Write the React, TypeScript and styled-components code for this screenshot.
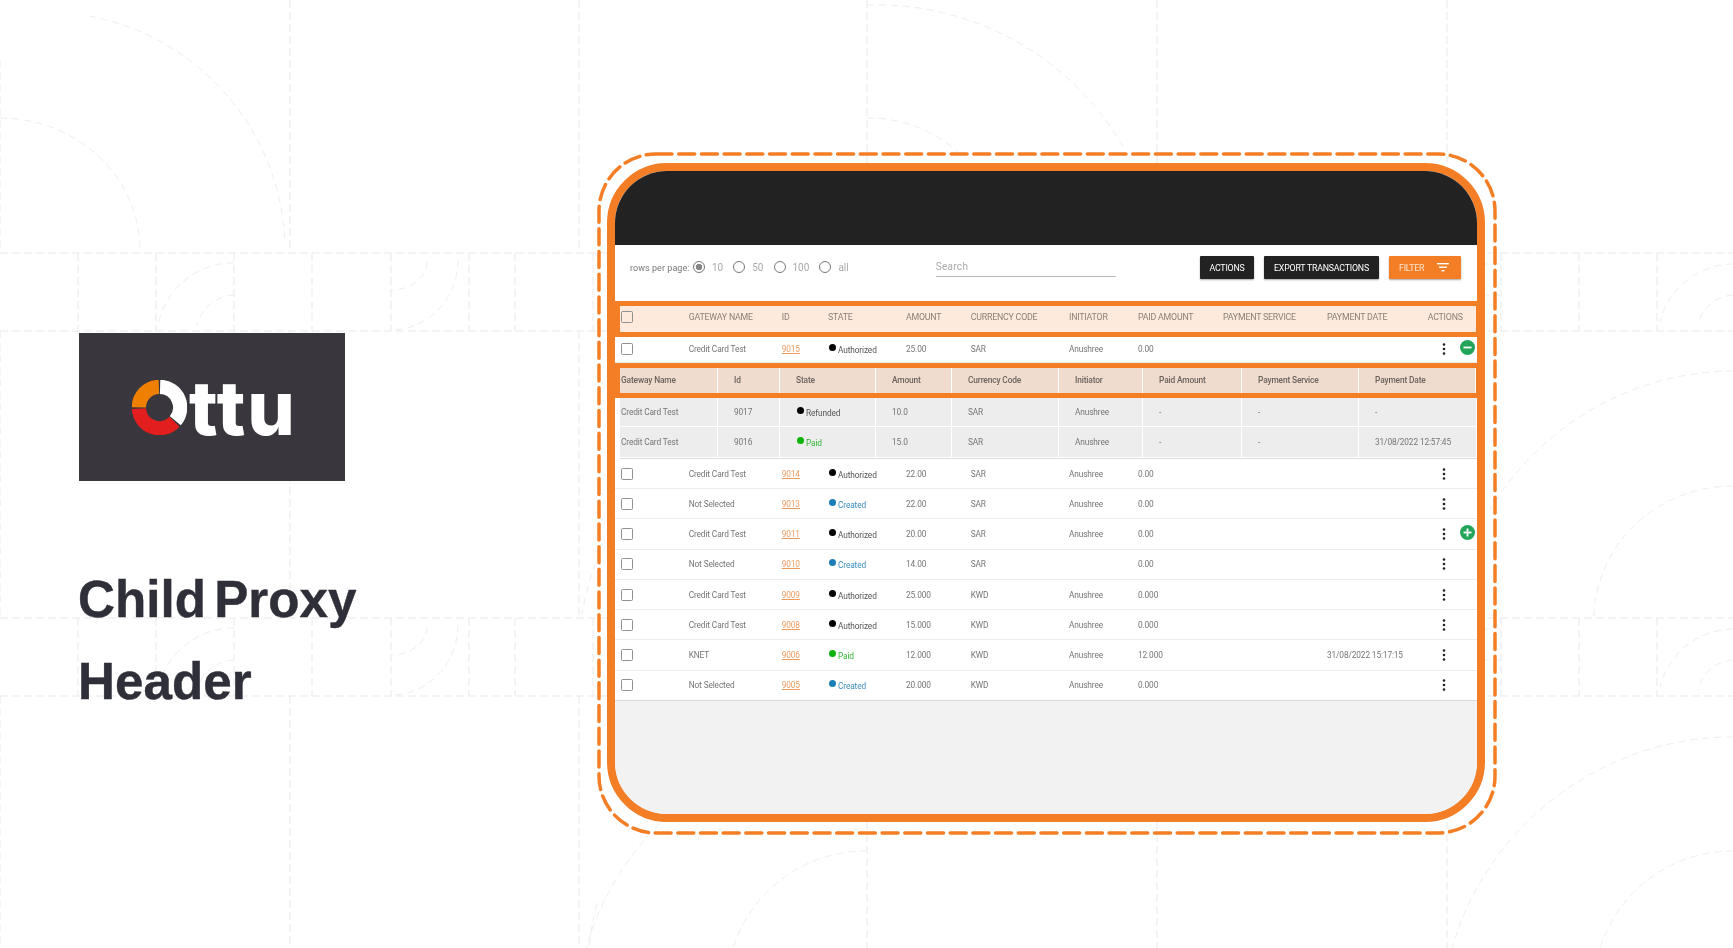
import * as React from 'react';
import styled, { createGlobalStyle } from 'styled-components';

const orange = '#f37e25';
const mainCols = '68.7px 93px 46.3px 78px 64.7px 98.3px 69px 85px 104px 100.7px 1fr';
const subCols = '98px 62px 96px 76px 107px 84px 99px 117px 1fr';

const GlobalStyle = createGlobalStyle`
  html, body {
    margin: 0;
    padding: 0;
    background: #fff;
  }
`;

const Page = styled.div`
  position: relative;
  display: flex;
  width: 1733px;
  height: 948px;
  overflow: hidden;
  background: #fff;
  font-family: Roboto, "Liberation Sans", sans-serif;
`;

const Backdrop = styled.svg`
  position: absolute;
  top: 0;
  left: 0;
  fill: none;
`;

const LeftColumn = styled.div`
  position: relative;
  flex: 0 0 607px;
  box-sizing: border-box;
  padding: 333px 0 0 79px;
`;

const LogoCard = styled.div`
  display: flex;
  align-items: center;
  gap: 2px;
  box-sizing: border-box;
  width: 266px;
  height: 148px;
  padding: 0 0 0 53px;
  background: #39373d;
  filter: blur(0.3px);
`;

const LogoWord = styled.span`
  color: #fff;
  font-family: Inter, sans-serif;
  font-weight: 800;
  font-size: 75px;
  line-height: 72px;
  letter-spacing: 2px;
  margin-top: 2px;
`;

const Title = styled.h1`
  margin: 78px 0 0 -1px;
  color: #2e2f38;
  font-family: "Liberation Sans", Arial, sans-serif;
  font-weight: 700;
  font-size: 51.2px;
  line-height: 82px;
  word-spacing: -6px;
  -webkit-text-stroke: 0.4px #2e2f38;
`;

const FrameWrap = styled.div`
  position: relative;
  width: 878px;
  height: 659px;
  margin-top: 163px;
`;

const DashRing = styled.svg`
  position: absolute;
  top: -12px;
  left: -11px;
  fill: none;
`;

const Frame = styled.div`
  display: flex;
  flex-direction: column;
  box-sizing: border-box;
  width: 100%;
  height: 100%;
  border: 8px solid ${orange};
  border-radius: 60px;
  overflow: hidden;
  background: #f2f2f2;
`;

const Blurred = styled.div`
  display: flex;
  flex-direction: column;
  flex: 1;
  filter: blur(0.3px);
`;

const DarkBar = styled.div`
  flex: 0 0 74px;
  background: #222;
  box-shadow: 0 1px 2px rgba(0, 0, 0, 0.35);
`;

const Toolbar = styled.div`
  display: flex;
  align-items: flex-start;
  box-sizing: border-box;
  height: 56px;
  padding: 11px 16px 0 15px;
  background: #fff;
`;

const RowsLabel = styled.span`
  margin: 7px 7px 0 0;
  width: 56px;
  color: #777;
  font-size: 9px;
  line-height: 11px;
  letter-spacing: 0.05px;
  white-space: nowrap;
`;

const RadioItem = styled.div`
  display: flex;
  align-items: center;
  gap: 7px;
  margin: 4px 10px 0 0;
  height: 14px;
  color: #aaa;
  font-size: 10px;
`;

const RadioMark = styled.span<{ $on?: boolean }>`
  position: relative;
  box-sizing: border-box;
  width: 12px;
  height: 12px;
  border: 1.2px solid #777;
  border-radius: 50%;
  background: ${(p) => (p.$on ? 'radial-gradient(circle, #888 0 3px, transparent 3.4px)' : 'transparent')};
`;

const SearchBox = styled.div`
  box-sizing: border-box;
  width: 180px;
  height: 21px;
  margin-left: 77px;
  padding-top: 5px;
  border-bottom: 1px solid #bbb;
  color: #aaa;
  font-size: 10px;
  letter-spacing: 0.3px;
`;

const ButtonRow = styled.div`
  display: flex;
  gap: 10px;
  margin-left: auto;
`;

const ActionButton = styled.button<{ $w: number; $accent?: boolean }>`
  display: flex;
  align-items: center;
  justify-content: ${(p) => (p.$accent ? 'space-between' : 'center')};
  box-sizing: border-box;
  width: ${(p) => p.$w}px;
  height: 23px;
  padding: 0 ${(p) => (p.$accent ? '12px 0 10px' : '0')};
  border: none;
  border-radius: 1px;
  background: ${(p) => (p.$accent ? orange : '#222')};
  box-shadow: 0 1px 2px rgba(0, 0, 0, 0.35);
  color: ${(p) => (p.$accent ? '#fde3cf' : '#fff')};
  font-family: inherit;
  font-size: 8.8px;
  letter-spacing: -0.2px;
  white-space: nowrap;
`;

const TableHead = styled.div`
  display: grid;
  grid-template-columns: ${mainCols};
  align-items: center;
  box-sizing: border-box;
  height: 36px;
  padding-bottom: 5px;
  border: solid ${orange};
  border-width: 5px 1px 5px 5px;
  background: #fdeadc;
  color: #8b8078;
  font-size: 8.8px;
  letter-spacing: -0.2px;
  white-space: nowrap;
`;

const Row = styled.div<{ $last?: boolean; $h?: number }>`
  display: grid;
  grid-template-columns: ${mainCols};
  align-items: center;
  box-sizing: border-box;
  height: ${(p) => p.$h ?? 30.25}px;
  padding-left: 5px;
  background: #fff;
  border-bottom: 1px solid ${(p) => (p.$last ? '#d9d9d9' : '#ececec')};
  color: #757575;
  font-size: 8.3px;
  letter-spacing: -0.12px;
  white-space: nowrap;
`;

const CheckCell = styled.div`
  display: flex;
  padding-left: 1px;
`;

const Checkbox = styled.span`
  box-sizing: border-box;
  width: 12px;
  height: 12px;
  border: 1.4px solid #909090;
  border-radius: 1.5px;
`;

const IdLink = styled.span`
  color: #ec9b5f;
  text-decoration: underline;
`;

const StateCell = styled.div<{ $tone: string }>`
  display: flex;
  align-items: center;
  gap: 2px;
  padding-left: 1px;
  color: ${(p) => p.$tone};
`;

const StateDot = styled.i<{ $tone: string }>`
  flex: 0 0 7px;
  height: 7px;
  margin-top: -3px;
  border-radius: 50%;
  background: ${(p) => p.$tone};
`;

const StateText = styled.span`
  margin-top: 2px;
`;

const ActionsCell = styled.div`
  display: flex;
  align-items: center;
  padding-left: 14px;
`;

const DotsIcon = styled.svg`
  width: 4px;
  height: 12px;
  fill: #222;
`;

const RoundIcon = styled.svg`
  width: 15px;
  height: 15px;
  margin: -3px 0 0 14px;
`;

const SubHead = styled.div`
  display: grid;
  grid-template-columns: ${subCols};
  align-items: stretch;
  box-sizing: border-box;
  height: 35.3px;
  border: solid ${orange};
  border-width: 5px 1px 5px 5px;
  background: #efdccf;
  color: #6b625b;
  font-size: 8.4px;
  font-weight: 500;
  letter-spacing: -0.15px;
  white-space: nowrap;
`;

const SubCell = styled.div<{ $first?: boolean }>`
  display: flex;
  align-items: center;
  padding-left: ${(p) => (p.$first ? 1 : 16)}px;
  border-right: 1px solid #fff;
`;

const SubRows = styled.div`
  padding-left: 5px;
  background: #fff;
`;

const SubRow = styled.div<{ $h: number }>`
  display: grid;
  grid-template-columns: ${subCols};
  height: ${(p) => p.$h}px;
  margin-bottom: 1px;
  background: #ededed;
  color: #757575;
  font-size: 8.3px;
  letter-spacing: -0.12px;
  white-space: nowrap;
`;

const SubDivider = styled.div`
  height: 1px;
  background: #dcdcdc;
`;

const Filler = styled.div`
  flex: 1;
  background: #f2f2f2;
`;

const RingMark = styled.svg`
  flex: 0 0 55px;
  width: 55px;
  height: 55px;
`;

const headers = ['', 'GATEWAY NAME', 'ID', 'STATE', 'AMOUNT', 'CURRENCY CODE', 'INITIATOR', 'PAID AMOUNT', 'PAYMENT SERVICE', 'PAYMENT DATE', 'ACTIONS'];
const subHeaders = ['Gateway Name', 'Id', 'State', 'Amount', 'Currency Code', 'Initiator', 'Paid Amount', 'Payment Service', 'Payment Date'];

const tones: Record<string, [string, string]> = {
  Authorized: ['#000', '#555'],
  Created: ['#1a7fb8', '#3a8dbd'],
  Paid: ['#0db30d', '#35b535'],
  Refunded: ['#000', '#555'],
};

type Txn = { gateway: string; id: string; state: string; amount: string; cur: string; by: string; paid: string; date?: string; toggle?: 'plus' | 'minus' };

const CC = 'Credit Card Test';
const NS = 'Not Selected';
const AN = 'Anushree';

const firstRow: Txn = { gateway: CC, id: '9015', state: 'Authorized', amount: '25.00', cur: 'SAR', by: AN, paid: '0.00', toggle: 'minus' };
const rows: Txn[] = [
  { gateway: CC, id: '9014', state: 'Authorized', amount: '22.00', cur: 'SAR', by: AN, paid: '0.00' },
  { gateway: NS, id: '9013', state: 'Created', amount: '22.00', cur: 'SAR', by: AN, paid: '0.00' },
  { gateway: CC, id: '9011', state: 'Authorized', amount: '20.00', cur: 'SAR', by: AN, paid: '0.00', toggle: 'plus' },
  { gateway: NS, id: '9010', state: 'Created', amount: '14.00', cur: 'SAR', by: '', paid: '0.00' },
  { gateway: CC, id: '9009', state: 'Authorized', amount: '25.000', cur: 'KWD', by: AN, paid: '0.000' },
  { gateway: CC, id: '9008', state: 'Authorized', amount: '15.000', cur: 'KWD', by: AN, paid: '0.000' },
  { gateway: 'KNET', id: '9006', state: 'Paid', amount: '12.000', cur: 'KWD', by: AN, paid: '12.000', date: '31/08/2022 15:17:15' },
  { gateway: NS, id: '9005', state: 'Created', amount: '20.000', cur: 'KWD', by: AN, paid: '0.000' },
];

const subRows = [
  { h: 28, cells: [CC, '9017', 'Refunded', '10.0', 'SAR', AN, '-', '-', '-'] },
  { h: 30, cells: [CC, '9016', 'Paid', '15.0', 'SAR', AN, '-', '-', '31/08/2022 12:57:45'] },
];

function StateLabel({ state }: { state: string }) {
  const [dot, text] = tones[state];
  return (
    <StateCell $tone={text}>
      <StateDot $tone={dot} />
      <StateText>{state}</StateText>
    </StateCell>
  );
}

function TxnRow({ row, last, h }: { row: Txn; last?: boolean; h?: number }) {
  return (
    <Row $last={last} $h={h}>
      <CheckCell><Checkbox /></CheckCell>
      <span>{row.gateway}</span>
      <IdLink>{row.id}</IdLink>
      <StateLabel state={row.state} />
      <span>{row.amount}</span>
      <span>{row.cur}</span>
      <span>{row.by}</span>
      <span>{row.paid}</span>
      <span />
      <span>{row.date}</span>
      <ActionsCell>
        <DotsIcon viewBox="0 0 4 12">
          <circle cx="2" cy="1.5" r="1.3" />
          <circle cx="2" cy="6" r="1.3" />
          <circle cx="2" cy="10.5" r="1.3" />
        </DotsIcon>
        {row.toggle && (
          <RoundIcon viewBox="0 0 15 15">
            <circle cx="7.5" cy="7.5" r="7.5" fill="#22a55b" />
            <rect x="3.5" y="6.6" width="8" height="1.8" fill="#fff" />
            {row.toggle === 'plus' && <rect x="6.6" y="3.5" width="1.8" height="8" fill="#fff" />}
          </RoundIcon>
        )}
      </ActionsCell>
    </Row>
  );
}

const longV = [
  [290, 0, 253], [290, 331, 618], [290, 696, 948],
  [579, 0, 253], [579, 331, 618], [579, 696, 948],
  [867, 0, 163], [867, 822, 948],
  [1157, 0, 163], [1157, 822, 948],
  [1447, 0, 163], [1447, 822, 948],
  [0, 60, 253], [0, 331, 618], [0, 696, 948],
];
const shortX = [78, 156, 234, 312, 391, 469, 515, 593, 1501, 1579, 1657];
const arcs = [
  'M89 16A240 240 0 0 1 285 243',
  'M0 118A140 132 0 0 1 140 250',
  'M867 5A285 285 0 0 1 1125 150',
  'M867 118A135 135 0 0 1 958 152',
  'M1733 371A285 285 0 0 0 1490 510',
  'M1733 486A139 134 0 0 0 1594 616',
  'M1733 737A293 293 0 0 0 1452 948',
  'M1733 851A139 139 0 0 0 1600 948',
  'M867 851A139 139 0 0 0 733 948',
  'M660 823A293 293 0 0 0 586 948',
  'M600 552A285 285 0 0 0 582 614',
  'M597 903A293 293 0 0 0 589 948',
];
const bandArcs = [0, 365].flatMap((dy) => [
  `M234 ${263 + dy}A77 77 0 0 0 158 ${325 + dy}`,
  `M234 ${295 + dy}A40 40 0 0 0 197 ${325 + dy}`,
  `M427 ${262 + dy}A36 28 0 0 1 391 ${290 + dy}`,
  `M458 ${260 + dy}A67 70 0 0 1 391 ${330 + dy}`,
  `M1733 ${264 + dy}A76 76 0 0 0 1660 ${322 + dy}`,
  `M1733 ${295 + dy}A38 38 0 0 0 1698 ${325 + dy}`,
  `M1501 ${264 + dy}H1485`,
  `M1501 ${295 + dy}H1485`,
]);

function Background() {
  return (
    <Backdrop width="1733" height="948" viewBox="0 0 1733 948">
      <g stroke="#e9e9e9" strokeWidth="1" strokeDasharray="8 4">
        {[253, 331, 618, 696].map((y) => <path key={y} d={`M0 ${y}H1733`} />)}
        {longV.map(([x, a, b]) => <path key={`${x}-${a}`} d={`M${x} ${a}V${b}`} />)}
        {[253, 618].flatMap((y) => shortX.map((x) => <path key={`${x}-${y}`} d={`M${x} ${y}V${y + 78}`} />))}
      </g>
      <g stroke="#eeeeee" strokeWidth="1" strokeDasharray="7 5">
        {[...arcs, ...bandArcs].map((d) => <path key={d} d={d} />)}
      </g>
    </Backdrop>
  );
}

export default function App() {
  return (
    <Page>
      <GlobalStyle />
      <Background />
      <LeftColumn>
        <LogoCard>
          <RingMark viewBox="0 0 56 56">
            <g fill="none" strokeWidth="14.6">
              <path d="M7 27.9A21 21 0 0 1 27.4 7" stroke="#ee7f00" />
              <path d="M28.6 7A21 21 0 0 1 44.1 41.5" stroke="#fff" />
              <path d="M43.2 42.5A21 21 0 0 1 7 29.1" stroke="#e21e1e" />
            </g>
          </RingMark>
          <LogoWord>ttu</LogoWord>
        </LogoCard>
        <Title>Child Proxy<br />Header</Title>
      </LeftColumn>
      <FrameWrap>
        <DashRing width="902" height="685" viewBox="0 0 902 685">
          <rect x="3" y="3" width="896" height="679" rx="57" stroke={orange} strokeWidth="3.5" strokeDasharray="16 6.7" strokeLinecap="round" />
        </DashRing>
        <Frame>
          <Blurred>
            <DarkBar />
            <Toolbar>
              <RowsLabel>rows per page:</RowsLabel>
              <RadioItem><RadioMark $on />10</RadioItem>
              <RadioItem><RadioMark />50</RadioItem>
              <RadioItem><RadioMark />100</RadioItem>
              <RadioItem><RadioMark />all</RadioItem>
              <SearchBox>Search</SearchBox>
              <ButtonRow>
                <ActionButton $w={54}>ACTIONS</ActionButton>
                <ActionButton $w={115}>EXPORT TRANSACTIONS</ActionButton>
                <ActionButton $w={72} $accent>
                  FILTER
                  <svg width="12" height="9" viewBox="0 0 12 9" fill="#fff">
                    <rect x="0" y="0" width="12" height="1.4" />
                    <rect x="2" y="3.5" width="8" height="1.4" />
                    <rect x="4.5" y="7" width="3" height="1.4" />
                  </svg>
                </ActionButton>
              </ButtonRow>
            </Toolbar>
            <TableHead>
              {headers.map((h, i) => (i === 0 ? <CheckCell key="check"><Checkbox /></CheckCell> : <span key={h}>{h}</span>))}
            </TableHead>
            <TxnRow row={firstRow} h={25.7} />
            <SubHead>
              {subHeaders.map((h, i) => <SubCell key={h} $first={i === 0}>{h}</SubCell>)}
            </SubHead>
            <SubRows>
              {subRows.map((r) => (
                <SubRow key={r.cells[1]} $h={r.h}>
                  {r.cells.map((c, i) => (
                    <SubCell key={i} $first={i === 0}>
                      {i === 2 ? <StateLabel state={c} /> : c}
                    </SubCell>
                  ))}
                </SubRow>
              ))}
              <SubDivider />
            </SubRows>
            {rows.map((r, i) => <TxnRow key={r.id} row={r} last={i === rows.length - 1} />)}
            <Filler />
          </Blurred>
        </Frame>
      </FrameWrap>
    </Page>
  );
}
